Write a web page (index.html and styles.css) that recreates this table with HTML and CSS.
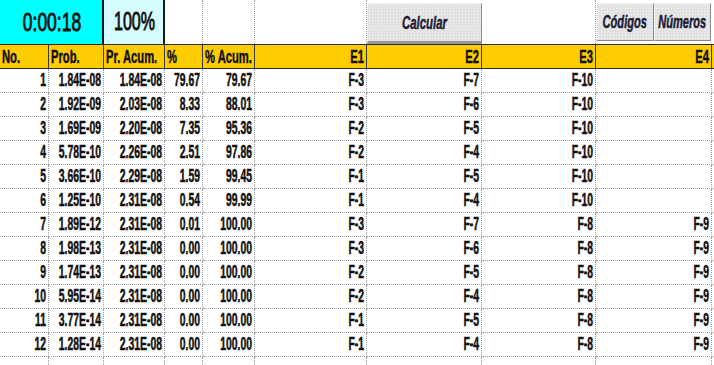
FILE: index.html
```html
<!DOCTYPE html>
<html lang="es">
<head>
<meta charset="utf-8">
<title>Hoja</title>
<link rel="stylesheet" href="styles.css">
</head>
<body>
<div class="sheet">
  <div class="c timer"><span class="s big">0:00:18</span></div>
  <div class="c pct"><span class="s big">100%</span></div>
  <div class="c top"></div>
  <div class="c top"></div>
  <div class="c top"></div>
  <div class="c top btncell"><div class="btn wide"><span class="s">Calcular</span></div></div>
  <div class="c top"></div>
  <div class="c top btncell2"><div class="btn"><span class="s">Códigos</span></div><div class="btn"><span class="s">Números</span></div></div>
  <div class="c top"></div>

  <div class="c h l"><span class="s">No.</span></div>
  <div class="c h l"><span class="s">Prob.</span></div>
  <div class="c h l"><span class="s">Pr. Acum.</span></div>
  <div class="c h l"><span class="s">%</span></div>
  <div class="c h l"><span class="s">% Acum.</span></div>
  <div class="c h"><span class="s">E1</span></div>
  <div class="c h"><span class="s">E2</span></div>
  <div class="c h"><span class="s">E3</span></div>
  <div class="c h"><span class="s">E4</span></div>
  <div class="c h end"></div>

  <div class="c"><span class="s">1</span></div><div class="c"><span class="s">1.84E-08</span></div><div class="c"><span class="s">1.84E-08</span></div><div class="c"><span class="s">79.67</span></div><div class="c"><span class="s">79.67</span></div><div class="c"><span class="s">F-3</span></div><div class="c"><span class="s">F-7</span></div><div class="c"><span class="s">F-10</span></div><div class="c"></div><div class="c"></div>
  <div class="c"><span class="s">2</span></div><div class="c"><span class="s">1.92E-09</span></div><div class="c"><span class="s">2.03E-08</span></div><div class="c"><span class="s">8.33</span></div><div class="c"><span class="s">88.01</span></div><div class="c"><span class="s">F-3</span></div><div class="c"><span class="s">F-6</span></div><div class="c"><span class="s">F-10</span></div><div class="c"></div><div class="c"></div>
  <div class="c"><span class="s">3</span></div><div class="c"><span class="s">1.69E-09</span></div><div class="c"><span class="s">2.20E-08</span></div><div class="c"><span class="s">7.35</span></div><div class="c"><span class="s">95.36</span></div><div class="c"><span class="s">F-2</span></div><div class="c"><span class="s">F-5</span></div><div class="c"><span class="s">F-10</span></div><div class="c"></div><div class="c"></div>
  <div class="c"><span class="s">4</span></div><div class="c"><span class="s">5.78E-10</span></div><div class="c"><span class="s">2.26E-08</span></div><div class="c"><span class="s">2.51</span></div><div class="c"><span class="s">97.86</span></div><div class="c"><span class="s">F-2</span></div><div class="c"><span class="s">F-4</span></div><div class="c"><span class="s">F-10</span></div><div class="c"></div><div class="c"></div>
  <div class="c"><span class="s">5</span></div><div class="c"><span class="s">3.66E-10</span></div><div class="c"><span class="s">2.29E-08</span></div><div class="c"><span class="s">1.59</span></div><div class="c"><span class="s">99.45</span></div><div class="c"><span class="s">F-1</span></div><div class="c"><span class="s">F-5</span></div><div class="c"><span class="s">F-10</span></div><div class="c"></div><div class="c"></div>
  <div class="c"><span class="s">6</span></div><div class="c"><span class="s">1.25E-10</span></div><div class="c"><span class="s">2.31E-08</span></div><div class="c"><span class="s">0.54</span></div><div class="c"><span class="s">99.99</span></div><div class="c"><span class="s">F-1</span></div><div class="c"><span class="s">F-4</span></div><div class="c"><span class="s">F-10</span></div><div class="c"></div><div class="c"></div>
  <div class="c"><span class="s">7</span></div><div class="c"><span class="s">1.89E-12</span></div><div class="c"><span class="s">2.31E-08</span></div><div class="c"><span class="s">0.01</span></div><div class="c"><span class="s">100.00</span></div><div class="c"><span class="s">F-3</span></div><div class="c"><span class="s">F-7</span></div><div class="c"><span class="s">F-8</span></div><div class="c"><span class="s">F-9</span></div><div class="c"></div>
  <div class="c"><span class="s">8</span></div><div class="c"><span class="s">1.98E-13</span></div><div class="c"><span class="s">2.31E-08</span></div><div class="c"><span class="s">0.00</span></div><div class="c"><span class="s">100.00</span></div><div class="c"><span class="s">F-3</span></div><div class="c"><span class="s">F-6</span></div><div class="c"><span class="s">F-8</span></div><div class="c"><span class="s">F-9</span></div><div class="c"></div>
  <div class="c"><span class="s">9</span></div><div class="c"><span class="s">1.74E-13</span></div><div class="c"><span class="s">2.31E-08</span></div><div class="c"><span class="s">0.00</span></div><div class="c"><span class="s">100.00</span></div><div class="c"><span class="s">F-2</span></div><div class="c"><span class="s">F-5</span></div><div class="c"><span class="s">F-8</span></div><div class="c"><span class="s">F-9</span></div><div class="c"></div>
  <div class="c"><span class="s">10</span></div><div class="c"><span class="s">5.95E-14</span></div><div class="c"><span class="s">2.31E-08</span></div><div class="c"><span class="s">0.00</span></div><div class="c"><span class="s">100.00</span></div><div class="c"><span class="s">F-2</span></div><div class="c"><span class="s">F-4</span></div><div class="c"><span class="s">F-8</span></div><div class="c"><span class="s">F-9</span></div><div class="c"></div>
  <div class="c"><span class="s">11</span></div><div class="c"><span class="s">3.77E-14</span></div><div class="c"><span class="s">2.31E-08</span></div><div class="c"><span class="s">0.00</span></div><div class="c"><span class="s">100.00</span></div><div class="c"><span class="s">F-1</span></div><div class="c"><span class="s">F-5</span></div><div class="c"><span class="s">F-8</span></div><div class="c"><span class="s">F-9</span></div><div class="c"></div>
  <div class="c"><span class="s">12</span></div><div class="c"><span class="s">1.28E-14</span></div><div class="c"><span class="s">2.31E-08</span></div><div class="c"><span class="s">0.00</span></div><div class="c"><span class="s">100.00</span></div><div class="c"><span class="s">F-1</span></div><div class="c"><span class="s">F-4</span></div><div class="c"><span class="s">F-8</span></div><div class="c"><span class="s">F-9</span></div><div class="c"></div>
  <div class="c"></div><div class="c"></div><div class="c"></div><div class="c"></div><div class="c"></div><div class="c"></div><div class="c"></div><div class="c"></div><div class="c"></div><div class="c"></div>
</div>
</body>
</html>
```

FILE: styles.css
```css
html, body {
  margin: 0;
  padding: 0;
  background: #ffffff;
}

body {
  font-family: "Liberation Sans", Arial, sans-serif;
  color: #111111;
  overflow: hidden;
}

.sheet {
  display: grid;
  grid-template-columns: 49px 55px 61px 38px 52px 112px 115px 114px 116px 2px;
  grid-template-rows: 44px 25px repeat(12, 24px) 24px;
  width: 714px;
}

.c {
  box-sizing: border-box;
  border-right: 1px dotted #9c9c9c;
  border-bottom: 1px dotted #9c9c9c;
  display: flex;
  align-items: center;
  justify-content: flex-end;
  padding-right: 2px;
  font-size: 10.4px;
  font-weight: bold;
  white-space: nowrap;
  min-width: 0;
  -webkit-text-stroke: 0.3px currentColor;
}

.s {
  display: inline-block;
  transform: scaleY(1.7);
  line-height: 12px;
}

.top {
  border-bottom: none;
}

.timer {
  grid-column: span 2;
  background: #00ffff;
  border-right: 2px solid #1a1a1a;
  border-bottom: none;
  justify-content: center;
  padding: 0 0 0 2px;
}

.pct {
  background: #d6fdfd;
  border-right: 2px solid #1a1a1a;
  border-bottom: none;
  justify-content: center;
  padding: 0 0 0 2px;
}

.big {
  font-size: 17.5px;
  font-weight: normal;
  transform: scaleY(1.52);
  line-height: 20px;
  -webkit-text-stroke: 0.6px currentColor;
}

.pct .big {
  font-size: 16px;
  transform: scaleY(1.62);
}

.btncell {
  align-items: stretch;
  padding: 3px 0 0 0;
  border-right: none;
}

.btncell2 {
  align-items: stretch;
  padding: 3px 1px 3px 0;
  border-right: none;
}

.btn {
  flex: 1;
  display: flex;
  align-items: center;
  justify-content: center;
  background-color: #e2e2e2;
  background-image: radial-gradient(#f6f6f6 0.6px, transparent 0.7px);
  background-size: 3px 3px;
  border-top: 1px solid #f4f4f4;
  border-left: 1px solid #f4f4f4;
  border-right: 1px solid #8a8a8a;
  border-bottom: 1px solid #8a8a8a;
  font-style: italic;
  color: #1c1c38;
  font-size: 11.1px;
}

.btn .s {
  transform: scaleY(1.6);
}

.btn.wide {
  font-size: 11.4px;
  border-bottom: 3px solid #9a9a9a;
}

.h {
  background-color: #ffcc00;
  background-image: radial-gradient(#ffe36a 0.6px, transparent 0.7px);
  background-size: 4px 4px;
  border-top: 1px solid #2a2a2a;
  border-bottom: 1px solid #2a2a2a;
  border-right: 1px solid #3a3a3a;
  font-size: 11.2px;
}

.h .s {
  transform: scaleY(1.6);
}

.h.l {
  justify-content: flex-start;
  padding: 0 0 0 2px;
}

.h.end {
  border-right: none;
  padding: 0;
}
```
